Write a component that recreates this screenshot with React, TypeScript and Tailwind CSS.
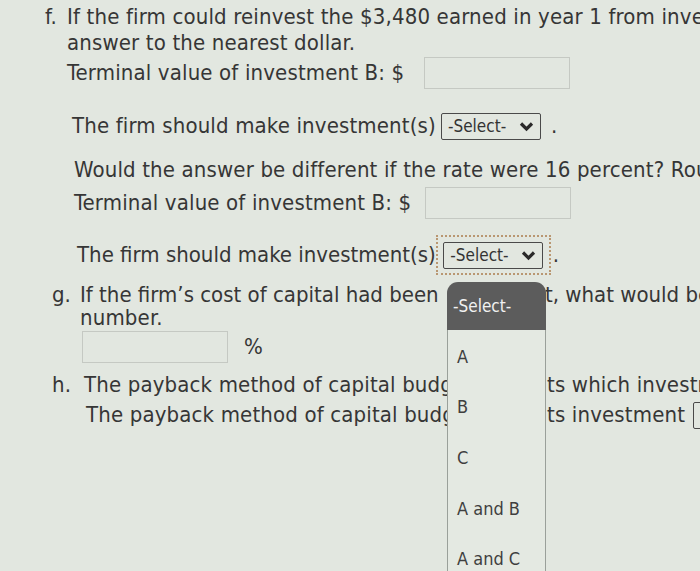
import React from 'react'

const font = "font-['DejaVu_Sans_Condensed','DejaVu_Sans',sans-serif]"

function SelectBox({ className = '' }: { className?: string }) {
  return (
    <span
      className={`inline-flex h-[27px] w-[100px] shrink-0 items-center justify-between rounded-[2px] border-[1.5px] border-[#4a4a4a] pl-[6px] pr-[6px] text-[17px] tracking-normal text-[#333] ${className}`}
    >
      <span>-Select-</span>
      <svg width="15" height="11" viewBox="0 0 15 11" fill="none">
        <path d="M2 2.5 L7.5 8 L13 2.5" stroke="#2a2a2a" strokeWidth="3.2" />
      </svg>
    </span>
  )
}

function TextInput({ className = '' }: { className?: string }) {
  return <span className={`inline-block h-[32px] w-[146px] shrink-0 border border-[#c5c9c3] ${className}`} />
}

export default function App() {
  const options = ['A', 'B', 'C', 'A and B', 'A and C']

  return (
    <div
      className={`relative h-[571px] w-[700px] overflow-hidden whitespace-nowrap bg-[#e2e7e0] text-[22px] leading-none tracking-[0.15px] text-[#363636] ${font}`}
    >
      {/* f. */}
      <div className="mt-[4px] flex h-[26px] items-center pl-[45px]">
        <span className="w-[22px] shrink-0">f.</span>
        <span>If the firm could reinvest the $3,480 earned in year 1 from investment B</span>
      </div>
      <div className="flex h-[26px] items-center pl-[67px]">answer to the nearest dollar.</div>
      <div className="flex h-[34px] items-center pl-[67px]">
        <span>Terminal value of investment B: $</span>
        <TextInput className="ml-[20px]" />
      </div>
      <div className="mt-[22px] flex h-[28px] items-center pl-[72px]">
        <span>The firm should make investment(s)</span>
        <SelectBox className="ml-[5px]" />
        <span className="ml-[10px]">.</span>
      </div>

      <div className="mt-[17px] flex h-[26px] items-center pl-[74px]">
        Would the answer be different if the rate were 16 percent? Round your answer
      </div>
      <div className="mt-[4px] flex h-[32px] items-center pl-[74px]">
        <span>Terminal value of investment B: $</span>
        <TextInput className="ml-[14px]" />
      </div>
      <div className="mt-[16px] flex h-[40px] items-center pl-[77px] tracking-normal">
        <span>The firm should make investment(s)</span>
        <span className="flex h-[40px] w-[115px] shrink-0 items-center justify-center border-2 border-dotted border-[#b99772]">
          <SelectBox />
        </span>
        <span className="ml-[2px]">.</span>
      </div>

      {/* g. */}
      <div className="mt-[8px] grid h-[24px] grid-cols-[447px_98px_1fr] items-center tracking-normal">
        <div className="flex overflow-hidden pl-[52px]">
          <span className="w-[28px] shrink-0">g.</span>
          <span>If the firm’s cost of capital had been</span>
        </div>
        <div />
        <div>t, what would be</div>
      </div>
      <div className="flex h-[22px] items-center pl-[80px]">number.</div>
      <div className="mt-[2px] flex h-[32px] items-center pl-[82px]">
        <TextInput className="w-[144px]" />
        <span className="ml-[16px]">%</span>
      </div>

      {/* h. */}
      <div className="mt-[9px] grid h-[26px] grid-cols-[447px_100px_1fr] items-center">
        <div className="flex overflow-hidden pl-[52px]">
          <span className="w-[32px] shrink-0">h.</span>
          <span>The payback method of capital budgeting</span>
        </div>
        <div />
        <div>ts which investment</div>
      </div>
      <div className="mt-[3px] grid h-[28px] grid-cols-[447px_100px_1fr] items-center">
        <div className="overflow-hidden pl-[86px]">The payback method of capital budgeting</div>
        <div />
        <div className="flex items-center">
          <span>ts investment</span>
          <SelectBox className="ml-[8px]" />
        </div>
      </div>

      {/* open dropdown */}
      <div className="absolute left-[447px] top-[282px] h-[300px] w-[99px] tracking-normal">
        <div className="flex h-[48px] items-center rounded-t-[11px] bg-[#5c5c5c] pl-[6px] text-[17px] text-[#f1f1f1]">
          -Select-
        </div>
        <div className="h-full border-x border-[#9aa09a] bg-[#e4e9e2] pl-[9px] text-[18px] text-[#3f3f3f]">
          {options.map((o) => (
            <div key={o} className="flex h-[50.6px] items-center pt-[3px]">
              {o}
            </div>
          ))}
        </div>
      </div>
    </div>
  )
}
